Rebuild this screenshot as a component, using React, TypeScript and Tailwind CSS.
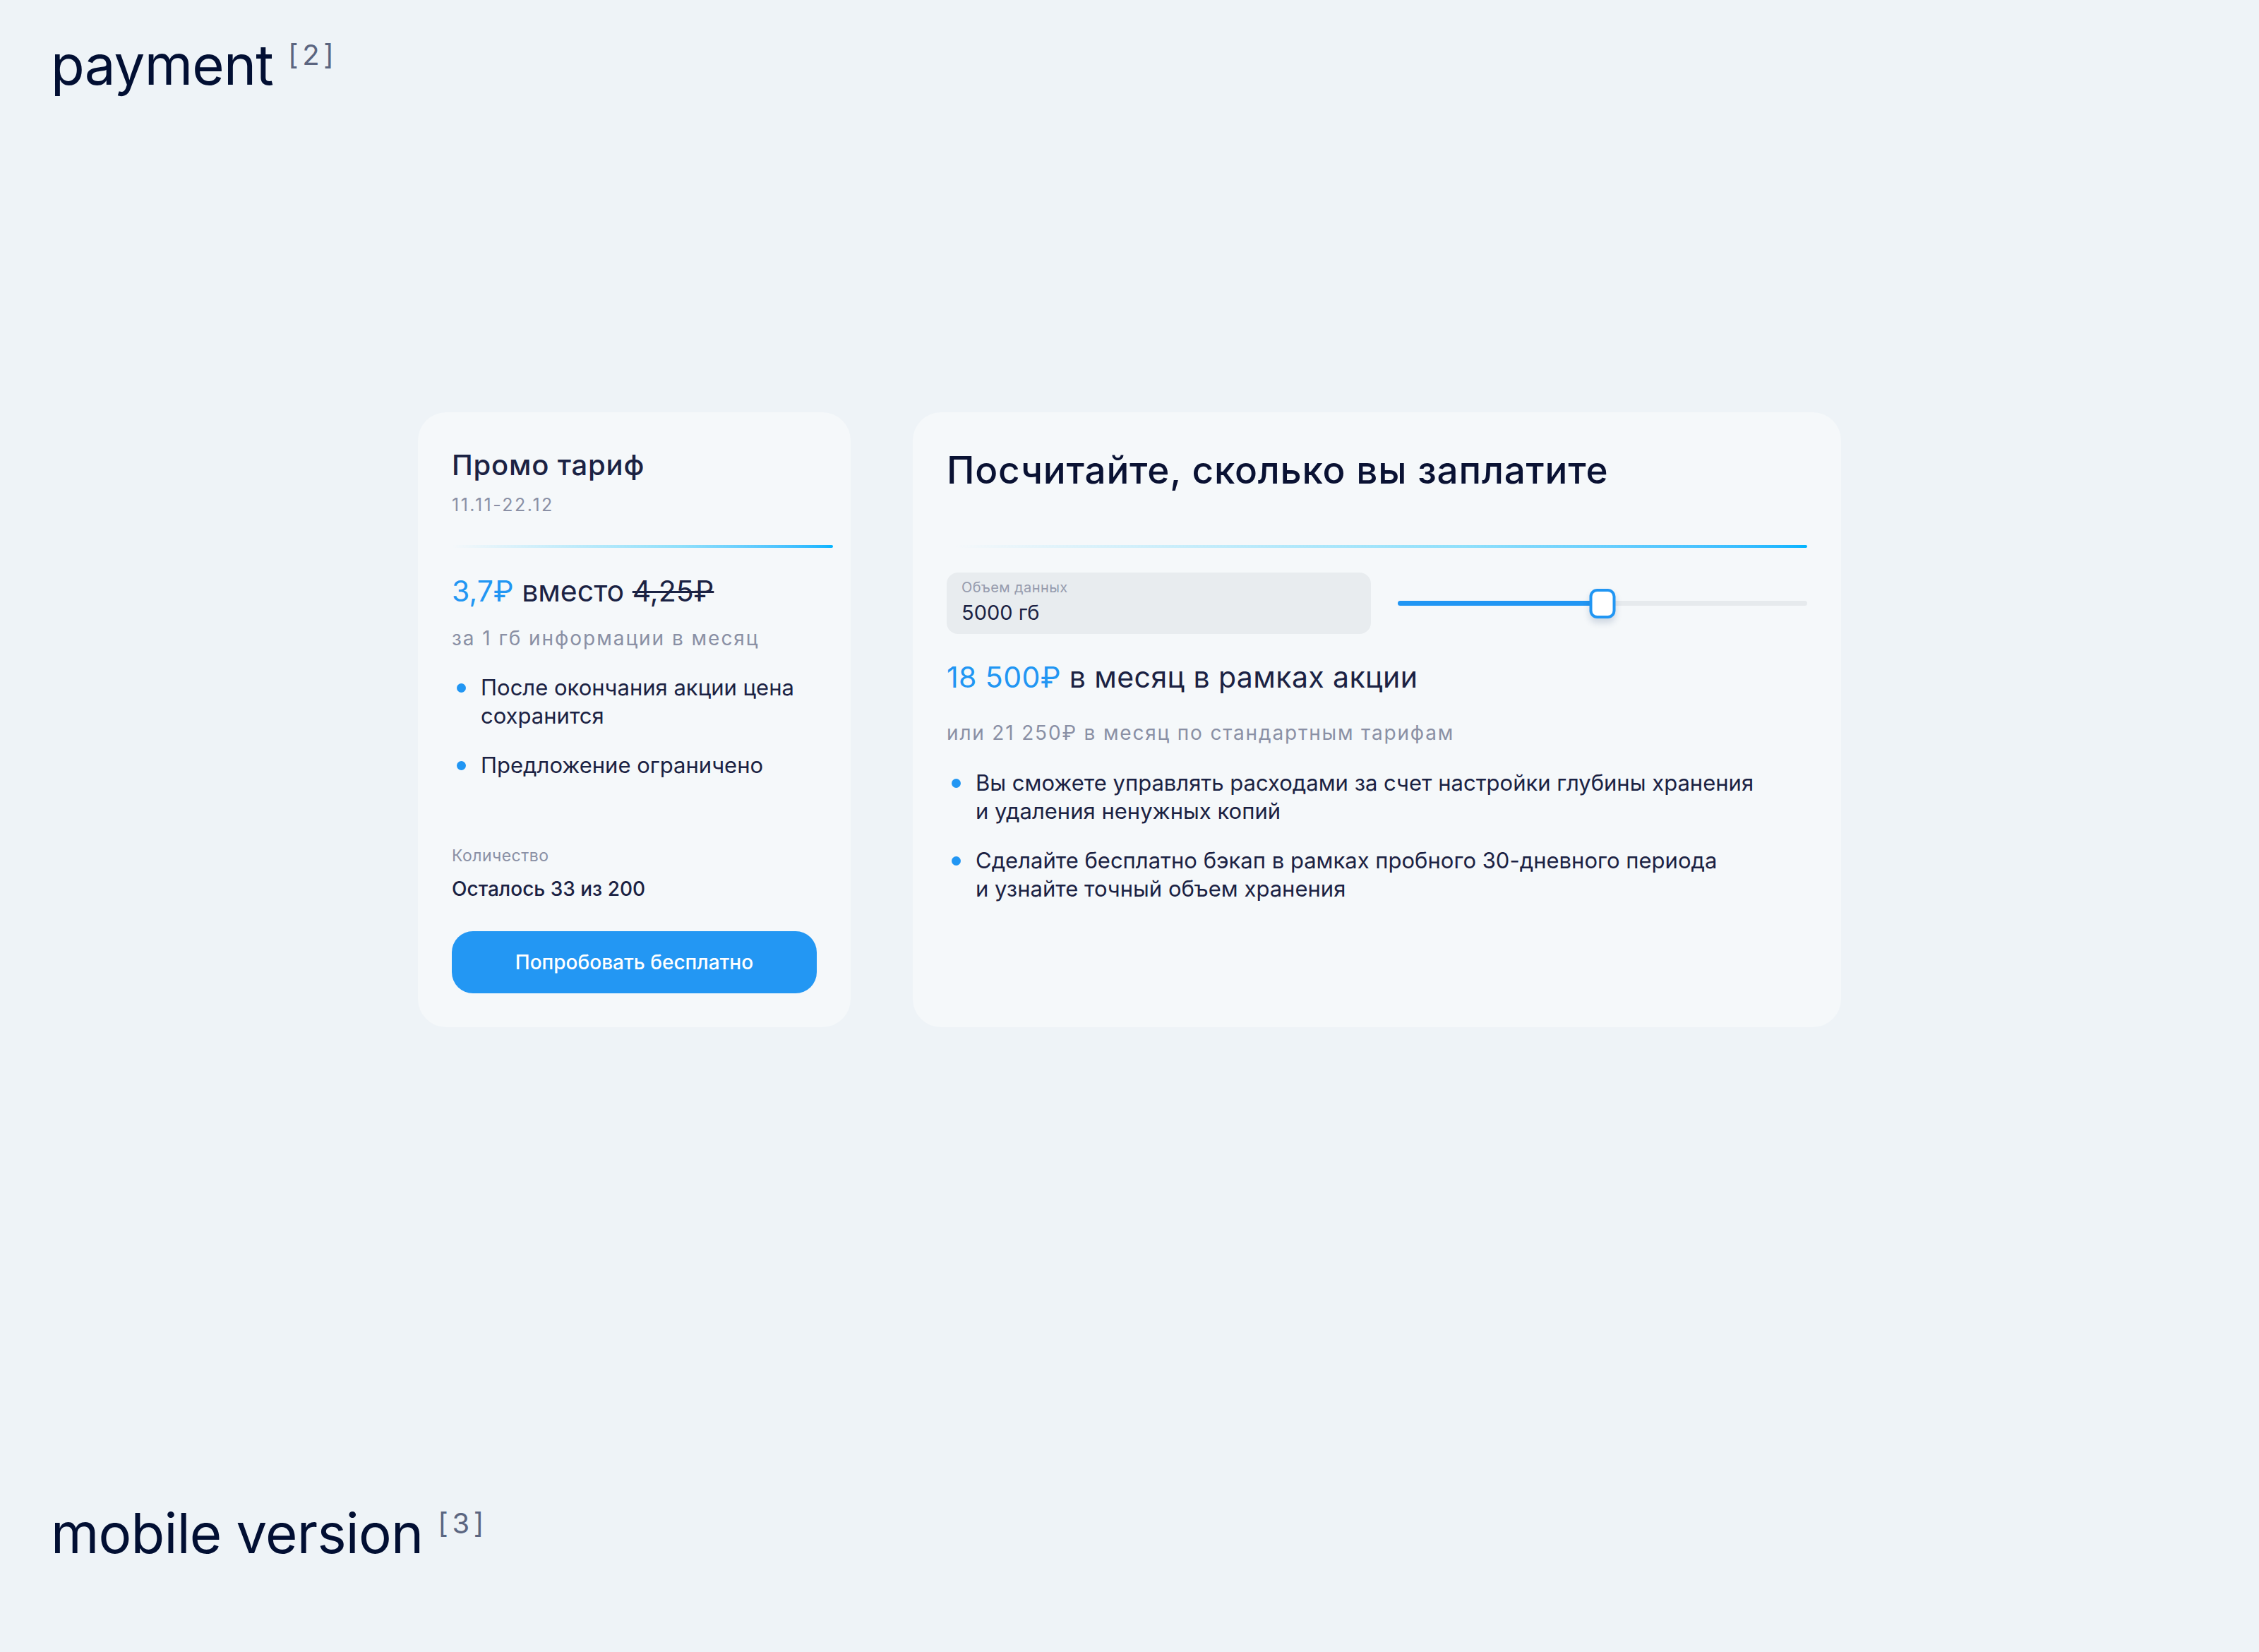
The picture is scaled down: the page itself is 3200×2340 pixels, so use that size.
import type { ReactNode } from "react";

const promoBullets = ["После окончания акции цена сохранится", "Предложение ограничено"];

const calcBullets: ReactNode[] = [
  <>
    Вы сможете управлять расходами за счет настройки глубины хранения
    <br />и удаления ненужных копий
  </>,
  <>
    Сделайте бесплатно бэкап в рамках пробного 30-дневного периода
    <br />и узнайте точный объем хранения
  </>,
];

function SectionTitle({ title, index }: { title: string; index: number }) {
  return (
    <h1 className="pl-[72px] text-[78px] leading-[94px] font-normal tracking-[-0.01em] text-[#020f33]">
      {title}
      <span className="ml-[21px] inline-block pt-[13px] align-top text-[40px] leading-[40px] tracking-[0.14em] text-[#5b6580]">
        [{index}]
      </span>
    </h1>
  );
}

function GradientLine({ className = "" }: { className?: string }) {
  return (
    <div
      className={`h-[4px] rounded-full bg-linear-to-r from-[#00b4ff]/0 via-[#8fe0fb] via-60% to-[#00b4ff] ${className}`}
    />
  );
}

function BulletList({ items }: { items: ReactNode[] }) {
  return (
    <ul className="flex flex-col gap-[30px]">
      {items.map((item, index) => (
        <li key={index} className="flex items-start">
          <span className="mt-[14px] ml-[7px] h-[13px] w-[13px] shrink-0 rounded-full bg-[#2196f3]" />
          <span className="ml-[21px] text-[31px] leading-[40px] text-[#1b2243]">{item}</span>
        </li>
      ))}
    </ul>
  );
}

function PromoCard() {
  return (
    <section className="flex w-[613px] flex-col rounded-[40px] bg-[#f5f8fa] px-[48px] pt-[52px] pb-[48px]">
      <h2 className="text-[40px] leading-[46px] font-medium tracking-[0.02em] text-[#1b2243]">Промо тариф</h2>
      <p className="mt-[18px] text-[25px] leading-[30px] tracking-[0.1em] text-[#8a90a5]">11.11-22.12</p>

      <GradientLine className="mt-[42px] -mr-[23px]" />

      <p className="mt-[37px] text-[41px] leading-[48px] text-[#1b2243]">
        <span className="text-[#2196f3]">3,7₽</span> вместо{" "}
        <span className="line-through decoration-[3px]">4,25₽</span>
      </p>
      <p className="mt-[28px] text-[28px] leading-[30px] tracking-[0.07em] text-[#8a90a5]">
        за 1 гб информации в месяц
      </p>

      <div className="mt-[35px]">
        <BulletList items={promoBullets} />
      </div>

      <p className="mt-[94px] text-[23px] leading-[28px] tracking-[0.02em] text-[#8a90a5]">Количество</p>
      <p className="mt-[17px] text-[28px] leading-[32px] font-medium text-[#1b2243]">Осталось 33 из 200</p>

      <button className="mt-[44px] h-[88px] w-full rounded-[30px] bg-[#2397f3] text-[28px] font-medium text-white">
        Попробовать бесплатно
      </button>
    </section>
  );
}

function Slider({ percent }: { percent: number }) {
  return (
    <div className="relative h-[7px] flex-1 rounded-full bg-[#e6eaed]">
      <div className="absolute inset-y-0 left-0 rounded-full bg-[#2196f3]" style={{ width: `${percent}%` }} />
      <div
        className="absolute top-1/2 h-[42px] w-[37px] -translate-x-1/2 -translate-y-1/2 rounded-[11px] border-[4px] border-[#2196f3] bg-white shadow-[0_6px_10px_rgba(30,60,110,0.18)]"
        style={{ left: `${percent}%` }}
      />
    </div>
  );
}

function CalculatorCard() {
  return (
    <section className="flex w-[1315px] flex-col rounded-[40px] bg-[#f5f8fa] px-[48px] pt-[51px] pb-[48px]">
      <h2 className="text-[53px] leading-[62px] font-medium tracking-[0.015em] text-[#0a1233]">
        Посчитайте, сколько вы заплатите
      </h2>

      <GradientLine className="mt-[75px] ml-[12px]" />

      <div className="mt-[35px] flex items-center gap-[38px]">
        <div className="h-[87px] w-[601px] rounded-[16px] bg-[#e8ecef] px-[21px] pt-[10px]">
          <p className="text-[20px] leading-[22px] tracking-[0.02em] text-[#969bad]">Объем данных</p>
          <p className="mt-[7px] text-[29px] leading-[36px] text-[#1b2243]">5000 гб</p>
        </div>
        <Slider percent={50} />
      </div>

      <p className="mt-[37px] text-[41px] leading-[48px] tracking-[0.01em] text-[#1b2243]">
        <span className="text-[#2196f3]">18 500₽</span> в месяц в рамках акции
      </p>
      <p className="mt-[40px] text-[28px] leading-[30px] tracking-[0.065em] text-[#8a90a5]">
        или 21 250₽ в месяц по стандартным тарифам
      </p>

      <div className="mt-[36px]">
        <BulletList items={calcBullets} />
      </div>
    </section>
  );
}

export default function App() {
  return (
    <div className="h-[2340px] w-[3200px] overflow-hidden bg-[#eef3f7] pt-[45px] font-['Inter','Noto_Sans',sans-serif]">
      <SectionTitle title="payment" index={2} />

      <main className="mt-[445px] flex items-stretch justify-center gap-[88px]">
        <PromoCard />
        <CalculatorCard />
      </main>

      <div className="mt-[670px]">
        <SectionTitle title="mobile version" index={3} />
      </div>
    </div>
  );
}
